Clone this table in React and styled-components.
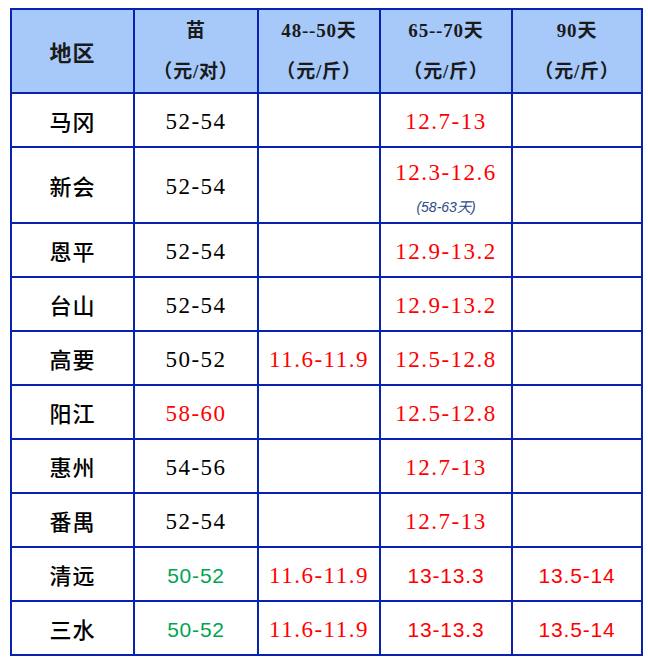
import React from 'react';
import styled, { createGlobalStyle } from 'styled-components';

const GlobalStyle = createGlobalStyle`
  body {
    margin: 0;
    background: #FFFFFF;
    font-family: "Liberation Serif", "Noto Sans CJK SC", serif;
  }
`;

const Page = styled.div`
  padding: 8px 0 0 10px;
`;

const PriceTable = styled.table`
  border-collapse: collapse;
  table-layout: fixed;
  width: 631px;
  border: 2px solid #0A22B0;
`;

const HeadRow = styled.tr`
  height: 83px;
  background: #A6C9FA;
`;

const BodyRow = styled.tr`
  height: ${({ $tall }) => ($tall ? '76px' : '54px')};
`;

const HeadCell = styled.th`
  border: 2px solid #0A22B0;
  padding: 0;
  font-family: "Liberation Serif", "Noto Sans CJK SC", serif;
  font-weight: bold;
  font-size: ${({ $big }) => ($big ? '22px' : '19px')};
  letter-spacing: ${({ $big }) => ($big ? '1px' : '0.8px')};
  color: #1A1A1A;
  text-align: center;
  vertical-align: middle;
`;

const HeadLine = styled.div`
  line-height: 41px;
`;

const RegionCell = styled.td`
  border: 2px solid #0A22B0;
  padding: 0;
  text-align: center;
  font-family: "Noto Sans CJK SC", sans-serif;
  font-weight: 500;
  font-size: 22px;
  color: #000;
  letter-spacing: 1px;
`;

const ValueCell = styled.td`
  border: 2px solid #0A22B0;
  padding: 4px 0 0;
  text-align: center;
  vertical-align: middle;
  font-family: ${({ $sans }) =>
    $sans ? '"Liberation Sans", sans-serif' : '"Liberation Serif", serif'};
  font-size: ${({ $sans }) => ($sans ? '21px' : '23px')};
  letter-spacing: ${({ $sans }) => ($sans ? '0.8px' : '1.5px')};
  color: ${({ $tone }) =>
    $tone === 'red' ? '#FF0000' : $tone === 'green' ? '#00A54F' : '#000000'};
`;

const Stack = styled.div`
  display: flex;
  flex-direction: column;
  align-items: center;
  gap: 10px;
  padding-top: 2px;
`;

const Note = styled.span`
  font-family: "Liberation Sans", "Noto Sans CJK SC", sans-serif;
  font-style: italic;
  font-size: 14px;
  letter-spacing: 0;
  color: #2E4A88;
`;

const rows = [
  { region: '马冈', seed: ['52-54'], d50: null, d70: ['12.7-13', 'red'], d90: null },
  { region: '新会', seed: ['52-54'], d50: null, d70: ['12.3-12.6', 'red'], d90: null, note: '(58-63天)' },
  { region: '恩平', seed: ['52-54'], d50: null, d70: ['12.9-13.2', 'red'], d90: null },
  { region: '台山', seed: ['52-54'], d50: null, d70: ['12.9-13.2', 'red'], d90: null },
  { region: '高要', seed: ['50-52'], d50: ['11.6-11.9', 'red'], d70: ['12.5-12.8', 'red'], d90: null },
  { region: '阳江', seed: ['58-60', 'red'], d50: null, d70: ['12.5-12.8', 'red'], d90: null },
  { region: '惠州', seed: ['54-56'], d50: null, d70: ['12.7-13', 'red'], d90: null },
  { region: '番禺', seed: ['52-54'], d50: null, d70: ['12.7-13', 'red'], d90: null },
  { region: '清远', seed: ['50-52', 'green', true], d50: ['11.6-11.9', 'red'], d70: ['13-13.3', 'red', true], d90: ['13.5-14', 'red', true] },
  { region: '三水', seed: ['50-52', 'green', true], d50: ['11.6-11.9', 'red'], d70: ['13-13.3', 'red', true], d90: ['13.5-14', 'red', true] },
];

const Cell = ({ value, note }) => {
  if (!value) return <ValueCell />;
  const [text, tone, sans] = value;
  if (note) {
    return (
      <ValueCell $tone={tone} $sans={sans}>
        <Stack>
          <span>{text}</span>
          <Note>{note}</Note>
        </Stack>
      </ValueCell>
    );
  }
  return (
    <ValueCell $tone={tone} $sans={sans}>
      {text}
    </ValueCell>
  );
};

export default function App() {
  return (
    <Page>
      <GlobalStyle />
      <PriceTable>
        <colgroup>
          <col style={{ width: 123 }} />
          <col style={{ width: 124 }} />
          <col style={{ width: 122 }} />
          <col style={{ width: 132 }} />
          <col style={{ width: 130 }} />
        </colgroup>
        <thead>
          <HeadRow>
            <HeadCell $big>地区</HeadCell>
            <HeadCell>
              <HeadLine>苗</HeadLine>
              <HeadLine>（元/对）</HeadLine>
            </HeadCell>
            <HeadCell>
              <HeadLine>48--50天</HeadLine>
              <HeadLine>（元/斤）</HeadLine>
            </HeadCell>
            <HeadCell>
              <HeadLine>65--70天</HeadLine>
              <HeadLine>（元/斤）</HeadLine>
            </HeadCell>
            <HeadCell>
              <HeadLine>90天</HeadLine>
              <HeadLine>（元/斤）</HeadLine>
            </HeadCell>
          </HeadRow>
        </thead>
        <tbody>
          {rows.map((r) => (
            <BodyRow key={r.region} $tall={!!r.note}>
              <RegionCell>{r.region}</RegionCell>
              <Cell value={r.seed} />
              <Cell value={r.d50} />
              <Cell value={r.d70} note={r.note} />
              <Cell value={r.d90} />
            </BodyRow>
          ))}
        </tbody>
      </PriceTable>
    </Page>
  );
}
